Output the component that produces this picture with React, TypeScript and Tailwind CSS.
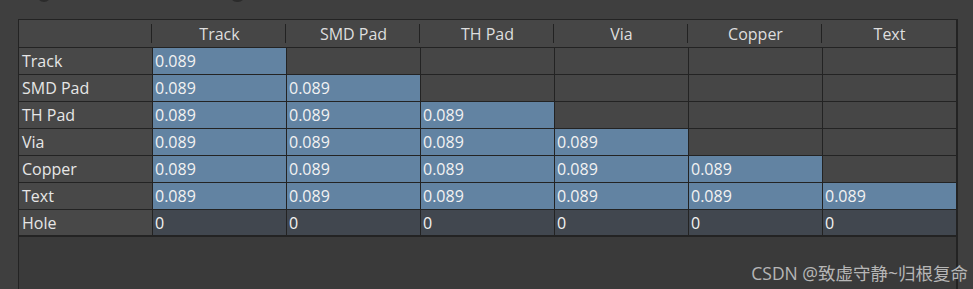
import React from "react";

const cols = ["Track", "SMD Pad", "TH Pad", "Via", "Copper", "Text"];
const rows = ["Track", "SMD Pad", "TH Pad", "Via", "Copper", "Text"];

export default function App() {
  return (
    <div
      className="relative w-[973px] h-[289px] overflow-hidden bg-[#3f3f3f] text-[16px] leading-none"
      style={{ fontFamily: '"Open Sans", "Noto Sans", "Noto Sans CJK SC", sans-serif' }}
    >
      {/* bottoms of the toolbar knobs above */}
      <div className="flex h-[19px]">
        <div className="ml-[37px] -mt-[12px] w-[14px] h-[14px] rounded-full bg-[#2b2b2b]" />
        <div className="ml-[179px] -mt-[12px] w-[15px] h-[14px] rounded-full bg-[#2b2b2b]" />
      </div>

      <div className="ml-[18px] w-[940px] h-[270px] border-l border-t border-r-2 border-[#232323] bg-[#3a3a3a]">
        {/* header */}
        <div className="flex h-[28px] bg-[#464646] border-b border-[#232323]">
          <div className="w-[133px] h-full flex items-center">
            <div className="ml-auto w-px h-[19px] bg-[#222]" />
          </div>
          {cols.map((c, i) => (
            <div
              key={c}
              className={`flex items-center h-full ${i < cols.length - 1 ? "w-[134px]" : "w-[133px]"}`}
            >
              <span className="flex-1 text-center text-[#dedede] pl-[2px]">{c}</span>
              {i < cols.length - 1 && <div className="w-px h-[19px] bg-[#222]" />}
            </div>
          ))}
        </div>

        {rows.map((r, ri) => (
          <div key={r} className="flex h-[27px] border-b border-[#232323]">
            <div className="w-[134px] h-full flex items-center pl-[3px] bg-[#484848] border-r border-[#232323] text-[#e6e6e6]">
              {r}
            </div>
            {cols.map((c, ci) => {
              const filled = ci <= ri;
              const last = ci === cols.length - 1;
              return (
                <div
                  key={c}
                  className={`h-full flex items-center pl-[2px] text-[#f2f2f2] ${
                    last ? "w-[133px]" : "w-[134px] border-r border-[#232323]"
                  } ${filled ? "bg-[#6283a2]" : "bg-[#464646]"}`}
                >
                  {filled ? "0.089" : ""}
                </div>
              );
            })}
          </div>
        ))}

        <div className="flex h-[27px] border-b-2 border-[#232323]">
          <div className="w-[134px] h-full flex items-center pl-[3px] bg-[#484848] border-r border-[#232323] text-[#e6e6e6]">
            Hole
          </div>
          {cols.map((c, ci) => (
            <div
              key={c}
              className={`h-full flex items-center pl-[2px] bg-[#41474f] text-[#f2f2f2] ${
                ci === cols.length - 1 ? "w-[133px]" : "w-[134px] border-r border-[#232323]"
              }`}
            >
              0
            </div>
          ))}
        </div>
      </div>

      <div className="absolute right-[5px] bottom-[7px] text-[17.5px] text-[#c4c4c4] opacity-90">
        CSDN @致虚守静~归根复命
      </div>
    </div>
  );
}
